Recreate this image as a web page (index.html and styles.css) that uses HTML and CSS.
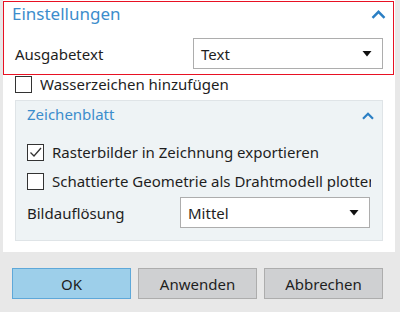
FILE: index.html
```html
<!DOCTYPE html>
<html lang="de">
<head>
    <meta charset="UTF-8">
    <title>Einstellungen</title>
    <link rel="stylesheet" href="styles.css">
</head>
<body>
    <div class="panel">
        <section class="group">
            <div class="group-head">
                <span class="group-title">Einstellungen</span>
                <svg class="caret" width="15" height="9" viewBox="0 0 15 9"><path d="M1.5 7.8 L7.5 1.8 L13.5 7.8" fill="none" stroke="#2b7fc4" stroke-width="2.4"/></svg>
            </div>
            <div class="field">
                <span class="field-label">Ausgabetext</span>
                <div class="select">
                    <span>Text</span>
                    <svg class="arrow" width="10" height="6" viewBox="0 0 10 6"><path d="M0.5 0 H9.5 L5 5.5 Z" fill="#111"/></svg>
                </div>
            </div>
        </section>

        <label class="check check-top"><span class="box"></span><span class="check-text">Wasserzeichen hinzufügen</span></label>

        <section class="sub">
            <div class="sub-head">
                <span class="sub-title">Zeichenblatt</span>
                <svg class="caret" width="12" height="8" viewBox="0 0 12 8"><path d="M1 6.8 L6 1.8 L11 6.8" fill="none" stroke="#2b7fc4" stroke-width="2.2"/></svg>
            </div>
            <label class="check"><span class="box"><svg width="15" height="15" viewBox="0 0 15 15"><path d="M2.5 7.5 L6 11 L13 3" fill="none" stroke="#333" stroke-width="1.3"/></svg></span><span class="check-text">Rasterbilder in Zeichnung exportieren</span></label>
            <label class="check"><span class="box"></span><span class="check-text">Schattierte Geometrie als Drahtmodell plotten</span></label>
            <div class="field sub-field">
                <span class="field-label">Bildauflösung</span>
                <div class="select">
                    <span>Mittel</span>
                    <svg class="arrow" width="10" height="6" viewBox="0 0 10 6"><path d="M0.5 0 H9.5 L5 5.5 Z" fill="#111"/></svg>
                </div>
            </div>
        </section>
    </div>

    <div class="buttons">
        <button class="btn btn-primary">OK</button>
        <button class="btn">Anwenden</button>
        <button class="btn">Abbrechen</button>
    </div>
</body>
</html>
```

FILE: styles.css
```css
body {
    margin: 0;
    background: #e8e8e8;
    font-family: "Noto Sans", "Open Sans", sans-serif;
    font-size: 15px;
    color: #1e1e1e;
    width: 400px;
    height: 312px;
    overflow: hidden;
}
.panel {
    margin-left: 3px;
    width: 392px;
    height: 252px;
    background: #fff;
    box-sizing: border-box;
    padding-top: 1px;
}
.group {
    border: 1px solid #e81123;
    margin-right: 1px;
    height: 74px;
    box-sizing: border-box;
}
.group-head {
    display: flex;
    justify-content: space-between;
    align-items: flex-start;
    height: 36px;
    padding: 0 7px 0 8px;
}
.group-title {
    color: #3c8dcc;
    font-size: 17px;
}
.group-head .caret {
    margin-top: 8px;
}
.field {
    display: flex;
    align-items: center;
    padding-left: 11px;
}
.field-label {
    width: 178px;
}
.select {
    display: flex;
    justify-content: space-between;
    align-items: center;
    width: 190px;
    height: 31px;
    box-sizing: border-box;
    border: 1px solid #adadad;
    background: #fff;
    padding: 0 10px 0 7px;
}
.check {
    display: flex;
    align-items: center;
    height: 17px;
    white-space: nowrap;
}
.check-text {
    min-width: 0;
    overflow: hidden;
    line-height: 21px;
}
.check-top {
    margin: 1px 0 0 12px;
}
.box {
    width: 17px;
    height: 17px;
    box-sizing: border-box;
    border: 1px solid #333;
    background: #fff;
    margin-right: 8px;
    flex-shrink: 0;
    display: flex;
    align-items: center;
    justify-content: center;
}
.sub {
    margin: 7px 0 0 12px;
    width: 368px;
    height: 141px;
    box-sizing: border-box;
    border: 1px solid #dfe4e7;
    background: #eef3f5;
    padding: 0 11px;
    overflow: hidden;
}
.sub-head {
    display: flex;
    justify-content: space-between;
    align-items: flex-start;
    height: 43px;
    padding-top: 3px;
    box-sizing: border-box;
}
.sub-head .caret {
    margin: 8px -3px 0 0;
}
.sub-title {
    color: #3c8dcc;
}
.sub .check + .check {
    margin-top: 12px;
}
.sub-field {
    padding-left: 0;
    margin-top: 7px;
}
.sub-field .field-label {
    width: 153px;
}
.buttons {
    display: flex;
    gap: 7px;
    padding: 16px 0 0 12px;
}
.btn {
    width: 119px;
    height: 31px;
    border: 1px solid #adadad;
    background: #cfd0d2;
    font-family: inherit;
    font-size: 15px;
    color: #1e1e1e;
    padding: 0;
}
.btn-primary {
    background: #9dcfea;
    border-color: #5ea8d9;
}
```
